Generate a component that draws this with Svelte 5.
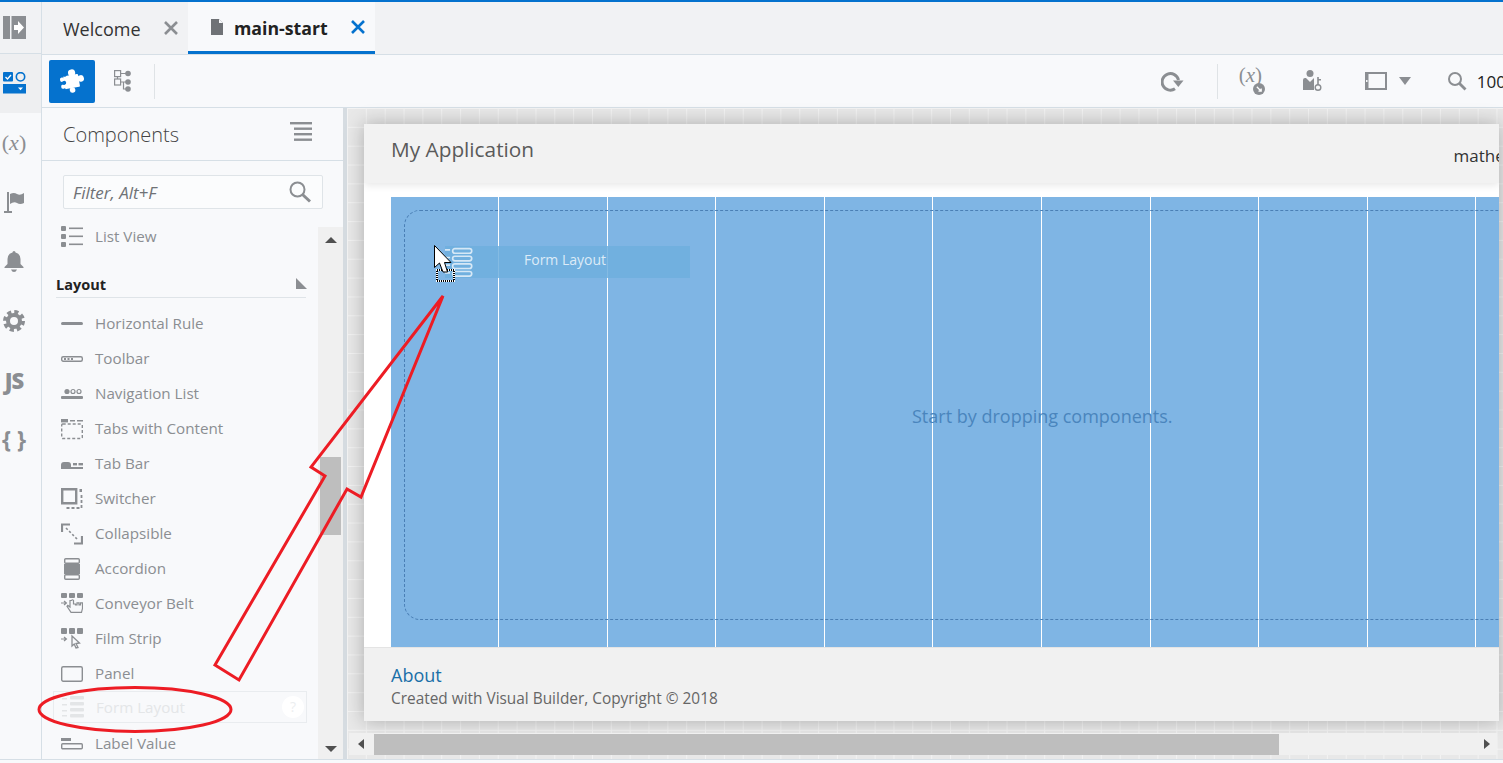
<script>
    // 组件面板条目，icon 是 22x22 的内联 SVG 内容
    const gray = "#8b8e92";
    const items = [
        { name: "Horizontal Rule", icon: `<rect x="0" y="9" width="22" height="3" rx="1.5"/>` },
        { name: "Toolbar", icon: `<rect x=".7" y="8.7" width="20.6" height="4.6" rx="1.5" fill="none" stroke="${gray}" stroke-width="1.4"/><rect x="3" y="10" width="2" height="2"/><rect x="6.5" y="10" width="2" height="2"/><rect x="10" y="10" width="2" height="2"/>` },
        { name: "Navigation List", icon: `<circle cx="6" cy="8.5" r="2.6"/><circle cx="12" cy="8.5" r="2" fill="none" stroke="${gray}" stroke-width="1.2"/><circle cx="18" cy="8.5" r="2" fill="none" stroke="${gray}" stroke-width="1.2"/><rect x="0" y="13" width="22" height="3" rx="1"/>` },
        { name: "Tabs with Content", icon: `<rect x="0" y="1" width="7" height="3.4"/><rect x="9" y="2" width="5" height="1.5"/><rect x="16" y="2" width="6" height="1.5"/><rect x=".7" y="6" width="20.6" height="14.5" rx="1" fill="none" stroke="${gray}" stroke-width="1.4" stroke-dasharray="3 2"/>` },
        { name: "Tab Bar", icon: `<path d="M0 15v-3q0-3 3-3h4q3 0 3 3v3z"/><rect x="12" y="10" width="4" height="2.4"/><rect x="17.5" y="10" width="4.5" height="2.4"/><rect x="0" y="14" width="22" height="2"/>` },
        { name: "Switcher", icon: `<path d="M1.2 1.2h14v14h-14z" fill="none" stroke="${gray}" stroke-width="2.4"/><rect x="18.5" y="1" width="2.5" height="3"/><path d="M20.5 7v13H5" fill="none" stroke="${gray}" stroke-width="1.8" stroke-dasharray="3 2"/>` },
        { name: "Collapsible", icon: `<path d="M1 9V1.500h8M21 13v7.500h-8" fill="none" stroke="${gray}" stroke-width="2.200"/><path d="M5 5l12 12" fill="none" stroke="${gray}" stroke-width="1.600" stroke-dasharray="2.400 2"/>` },
        { name: "Accordion", icon: `<rect x="3.700" y=".7" width="14.600" height="4.600" rx="1" fill="none" stroke="${gray}" stroke-width="1.400"/><rect x="3" y="6" width="16" height="10"/><rect x="3.700" y="16.700" width="14.600" height="4.600" rx="1" fill="none" stroke="${gray}" stroke-width="1.400"/>` },
        { name: "Conveyor Belt", icon: `<rect x="0" y="0" width="6" height="5" rx="1"/><rect x="8" y="0" width="6" height="5" rx="1"/><rect x="16" y="0" width="6" height="5" rx="1"/><path d="M0 10h5M3 8l2.400 2L3 12" fill="none" stroke="${gray}" stroke-width="1.200"/><path d="M9 7.500v6.500l-2.200-1.600-.8 1 4 6h10.500l1-4v-5.500h-2v2h-1.500v-2h-2v2h-1.500V11h-2V7.500q-1-1.500-2 0z" fill="none" stroke="${gray}" stroke-width="1.200"/>` },
        { name: "Film Strip", icon: `<rect x="0" y="0" width="6" height="6" rx="1"/><rect x="8" y="0" width="6" height="6" rx="1"/><rect x="16" y="0" width="6" height="6" rx="1"/><path d="M0 11h5M3 9l2.400 2L3 13" fill="none" stroke="${gray}" stroke-width="1.200"/><path d="M11 8l7.500 7-3.500.5 2 4-2 .5-1.800-4L11 18z" fill="none" stroke="${gray}" stroke-width="1.300"/>` },
        { name: "Panel", icon: `<rect x=".7" y="3.700" width="20.600" height="14.600" rx="1.500" fill="none" stroke="${gray}" stroke-width="1.400"/>` },
        { name: "Form Layout", ghost: true, icon: `<rect x="0" y="2" width="5" height="1.500"/><rect x="0" y="8" width="5" height="1.500"/><rect x="0" y="14" width="5" height="1.500"/><rect x="0" y="19" width="5" height="1.500"/><rect x="8" y="0" width="14" height="3.500" rx="1"/><rect x="8" y="6" width="14" height="3.500" rx="1"/><rect x="8" y="12" width="14" height="3.500" rx="1"/><rect x="8" y="18" width="14" height="3.500" rx="1"/>` },
        { name: "Label Value", icon: `<rect x="0" y="5" width="10" height="3"/><rect x=".7" y="10.700" width="20.600" height="5" rx="1" fill="none" stroke="${gray}" stroke-width="1.400"/>` },
    ];
    const listView = `<rect x="0" y="0" width="5" height="5" rx="1"/><rect x="0" y="8" width="5" height="5" rx="1"/><rect x="0" y="16" width="5" height="5" rx="1"/><rect x="8" y="1.500" width="14" height="1.600"/><rect x="8" y="9.500" width="14" height="1.600"/><rect x="8" y="17.500" width="14" height="1.600"/>`;

    const columns = Array.from({ length: 11 });
</script>

<div class="shell">
    <div class="app">
        <!-- 左侧图标栏 -->
        <nav class="rail">
            <div class="rail-top">
                <svg width="23" height="23" viewBox="0 0 23 23"><path d="M0 0h7v23H0zM8.500 0H23v23H8.500z" fill="#8b8e92"/><path d="M11 9h4V5l6 6.500-6 6.500v-4h-4z" fill="#fff"/></svg>
            </div>
            <div class="rail-item active">
                <svg width="23" height="23" viewBox="0 0 23 23">
                    <rect x="0" y="0" width="10" height="9.500" rx="1" fill="#0572ce"/>
                    <path d="M2.500 5l2 2 3.500-4" fill="none" stroke="#fff" stroke-width="1.300"/>
                    <circle cx="17.500" cy="4.800" r="4.200" fill="none" stroke="#0572ce" stroke-width="1.600"/>
                    <rect x="0" y="12" width="23" height="9.500" fill="#0572ce"/>
                    <path d="M15 15.500h5l-2.500 2.800z" fill="#fff"/>
                </svg>
            </div>
            <div class="rail-item"><span class="rail-x">(<i>x</i>)</span></div>
            <div class="rail-item">
                <svg width="20" height="23" viewBox="0 0 20 23" fill="#8b8e92"><rect x="3" y="1" width="2" height="20"/><rect x="0" y="20" width="8" height="2"/><path d="M6 3q4-2 7 0t7-1v10q-4 2-7 0t-7 1z"/></svg>
            </div>
            <div class="rail-item">
                <svg width="20" height="23" viewBox="0 0 20 23" fill="#8b8e92"><path d="M10 1q1.500 0 1.500 1.500Q16.500 4 16.500 9v5l3 3v1H.500v-1l3-3V9q0-5 5-6.500Q8.500 1 10 1z"/><path d="M7 19.500h6q-1 2.500-3 2.500t-3-2.500z"/></svg>
            </div>
            <div class="rail-item">
                <svg width="22" height="22" viewBox="0 0 22 22" fill="none" stroke="#8b8e92"><circle cx="11" cy="11" r="6" stroke-width="4"/><circle cx="11" cy="11" r="9" stroke-width="4" stroke-dasharray="4.070 3"/></svg>
            </div>
            <div class="rail-item"><span class="rail-js">JS</span></div>
            <div class="rail-item"><span class="rail-brace">&#123; &#125;</span></div>
        </nav>

        <div class="main">
            <!-- 标签页 -->
            <div class="tabs">
                <div class="tab welcome">
                    <span>Welcome</span>
                    <svg class="close" width="14" height="14" viewBox="0 0 14 14"><path d="M1 1l12 12M13 1L1 13" stroke="#8b8e92" stroke-width="2.600"/></svg>
                </div>
                <div class="tab current">
                    <svg width="12" height="16" viewBox="0 0 12 16"><path d="M0 0h8l4 4v12H0z" fill="#6f7276"/><path d="M8 0v4h4z" fill="#f8f9fb"/></svg>
                    <span class="current-name">main-start</span>
                    <svg class="close" width="14" height="14" viewBox="0 0 14 14"><path d="M1 1l12 12M13 1L1 13" stroke="#0572ce" stroke-width="2.600"/></svg>
                </div>
            </div>

            <!-- 工具栏 -->
            <div class="toolbar">
                <button class="tool-main" aria-label="Components">
                    <svg width="26" height="26" viewBox="0 0 26 26">
                        <g transform="rotate(-10 13 13)" fill="#fff">
                            <rect x="5" y="7" width="15" height="13" rx="1"/>
                            <circle cx="14" cy="5" r="3.600"/>
                            <circle cx="22" cy="12" r="3.300"/>
                            <circle cx="12" cy="22" r="2.800"/>
                            <circle cx="3.500" cy="10" r="2.200"/>
                            <circle cx="3.500" cy="17" r="2.200"/>
                            <circle cx="5" cy="13.500" r="2" fill="#0572ce"/>
                            <circle cx="7" cy="6" r="1.500" fill="#0572ce"/>
                        </g>
                    </svg>
                </button>
                <svg class="tree" width="18" height="22" viewBox="0 0 18 22" fill="none" stroke="#8b8e92" stroke-width="1.200">
                    <rect x=".6" y=".6" width="6" height="6"/>
                    <rect x=".6" y="9" width="6" height="6"/>
                    <path d="M6.600 3.500h6M3.500 6.600V9M6.600 12h6M9.500 12v7h3"/>
                    <circle cx="14" cy="3.500" r="2.800" fill="#8b8e92" stroke="none"/>
                    <circle cx="14" cy="12" r="2.800" fill="#8b8e92" stroke="none"/>
                    <circle cx="14" cy="19" r="2.800" fill="#8b8e92" stroke="none"/>
                </svg>
                <span class="tool-sep"></span>

                <div class="tool-right">
                    <svg width="23" height="22" viewBox="0 0 23 22" fill="none"><path d="M14 18.800A8.300 8.300 0 1 1 17.500 10" stroke="#8b8e92" stroke-width="3"/><path d="M12 10.500h10.500l-5.200 6.500z" fill="#8b8e92"/></svg>
                    <span class="tool-sep right-sep"></span>
                    <span class="tool-vars">
                        <span class="vars-text">(<i>x</i>)</span>
                        <svg width="12" height="12" viewBox="0 0 11 11"><circle cx="5.500" cy="5.500" r="5.500" fill="#8b8e92"/><path d="M3.500 3.500l4 4M7.500 5v2.500H5" fill="none" stroke="#fff" stroke-width="1.200"/></svg>
                    </span>
                    <svg class="tool-user" width="20" height="22" viewBox="0 0 20 22" fill="#8b8e92"><circle cx="7" cy="3.500" r="3.500"/><path d="M0 20V10q0-2 2-2h1l4 4 4-4v12z"/><circle cx="15" cy="17.500" r="2.800" fill="#f8f9fb" stroke="#8b8e92" stroke-width="1.400"/><path d="M14.200 15V7h1.600v2H18v1.400h-2.200V15z"/></svg>
                    <svg class="tool-frame" width="22" height="18" viewBox="0 0 22 18"><path d="M0 0h22v18H0z" fill="#8b8e92"/><rect x="3.500" y="2" width="16.500" height="14" fill="#f8f9fb"/><rect x="1" y="8" width="1.500" height="2" fill="#f8f9fb"/></svg>
                    <span class="caret"></span>
                    <svg class="tool-search" width="20" height="20" viewBox="0 0 20 20" fill="none" stroke="#8b8e92"><circle cx="8" cy="8" r="6" stroke-width="2"/><path d="M12.500 12.500l6 6" stroke-width="2.800"/></svg>
                    <span class="zoom-value">100%</span>
                </div>
            </div>

            <div class="work">
                <!-- 组件面板 -->
                <aside class="panel">
                    <div class="panel-head">
                        <span class="panel-title">Components</span>
                        <svg width="22" height="20" viewBox="0 0 22 20" fill="#8b8e92"><rect x="0" y="0" width="22" height="2.400"/><rect x="4" y="5.500" width="18" height="2.400"/><rect x="4" y="11" width="18" height="2.400"/><rect x="4" y="16.500" width="18" height="2.400"/></svg>
                    </div>
                    <div class="filter-wrap">
                        <div class="filter">
                            <span class="filter-hint">Filter, Alt+F</span>
                            <svg width="24" height="24" viewBox="0 0 24 24" fill="none" stroke="#8b8e92"><circle cx="9.500" cy="9.500" r="7" stroke-width="2"/><path d="M14.500 14.500l7.500 7" stroke-width="3"/></svg>
                        </div>
                    </div>
                    <div class="list-area">
                        <div class="list">
                            <div class="row">
                                <svg width="22" height="22" viewBox="0 0 22 22" fill={gray}>{@html listView}</svg>
                                <span class="row-name">List View</span>
                            </div>
                            <div class="section-head">
                                <span>Layout</span>
                                <span class="corner"></span>
                            </div>
                            {#each items as item (item.name)}
                                <div class="row" class:ghost={item.ghost}>
                                    <svg width="22" height="22" viewBox="0 0 22 22" fill={gray}>{@html item.icon}</svg>
                                    <span class="row-name">{item.name}</span>
                                    {#if item.ghost}
                                        <span class="help">?</span>
                                    {/if}
                                </div>
                            {/each}
                        </div>
                        <div class="vscroll">
                            <span class="arrow-up"></span>
                            <span class="vthumb"></span>
                            <span class="arrow-down"></span>
                        </div>
                    </div>
                </aside>

                <!-- 画布 -->
                <section class="canvas">
                    <div class="viewport">
                        <div class="page">
                            <header class="page-head">
                                <span class="app-name">My Application</span>
                                <span class="user">mathew</span>
                            </header>
                            <div class="page-body">
                                <div class="drop">
                                    {#each columns as _, i (i)}
                                        <div class="col"></div>
                                    {/each}
                                    <div class="dash"></div>
                                    <span class="drop-hint">Start by dropping components.</span>
                                    <div class="drag-ghost">
                                        <svg width="28" height="30" viewBox="0 0 22 23" fill="none" stroke="#d6e8f6" stroke-width="1.300">
                                            <path d="M0 2h4M0 8h4M0 14h4M0 20h4"/>
                                            <rect x="6" y="1" width="15" height="3.600" rx="1.800"/>
                                            <rect x="6" y="7" width="15" height="3.600" rx="1.800"/>
                                            <rect x="6" y="13" width="15" height="3.600" rx="1.800"/>
                                            <rect x="6" y="19" width="15" height="3.600" rx="1.800"/>
                                        </svg>
                                        <span>Form Layout</span>
                                    </div>
                                </div>
                            </div>
                            <footer class="page-foot">
                                <span class="about">About</span>
                                <span class="copy">Created with Visual Builder, Copyright © 2018</span>
                            </footer>
                        </div>
                    </div>
                    <div class="hscroll">
                        <span class="arrow-left"></span>
                        <span class="hthumb"></span>
                        <span class="arrow-right"></span>
                    </div>
                </section>
            </div>
        </div>
    </div>

    <!-- 截图上的批注和拖动光标 -->
    <svg class="notes" width="1503" height="763" viewBox="0 0 1503 763">
        <polygon points="443,296 361,497 347,489 239,680 215,665 325,476 311,467" fill="none" stroke="#ed1c24" stroke-width="3"/>
        <ellipse cx="135" cy="709.500" rx="96" ry="22" fill="none" stroke="#ed1c24" stroke-width="3"/>
        <rect x="437" y="270" width="17" height="11" fill="none" stroke="#fff" stroke-width="2"/>
        <rect x="437" y="270" width="17" height="11" fill="none" stroke="#000" stroke-width="2" stroke-dasharray="1 1"/>
        <path d="M434.500 245.500v22l5-4.500 3.500 9h4.500l-3-9.500h6.500z" fill="#fff" stroke="#000"/>
    </svg>
</div>

<style>
    :global(body) {
        margin: 0;
        overflow: hidden;
    }

    .shell {
        position: relative;
        width: 1503px;
        height: 763px;
        box-sizing: border-box;
        padding-bottom: 3px;
        background: #f8f9fb;
        font-family: "Open Sans", "Liberation Sans", sans-serif;
        overflow: hidden;
    }

    .app {
        display: flex;
        height: 100%;
        box-sizing: border-box;
        border-top: 2px solid #0572ce;
        border-bottom: 1px solid #d6dfe6;
    }

    .rail {
        flex: 0 0 41px;
        border-right: 1px solid #d6dfe6;
        display: flex;
        flex-direction: column;
    }

    .rail-top {
        height: 52px;
        flex-shrink: 0;
        box-sizing: border-box;
        background: #f1f2f4;
        border-bottom: 1px solid #d6dfe6;
        display: flex;
        align-items: center;
        padding-left: 3px;
    }

    .rail-item {
        height: 59.3px;
        flex-shrink: 0;
        display: flex;
        align-items: center;
        justify-content: center;
        padding-right: 13px;
        color: #8b8e92;
    }

    .rail-item.active {
        background: #eeeff1;
    }

    .rail-x {
        font-family: "Liberation Serif", serif;
        font-size: 22px;
    }

    .rail-js {
        font-size: 22px;
        font-weight: 800;
        letter-spacing: -1px;
    }

    .rail-brace {
        font-size: 23px;
        font-weight: 700;
        white-space: nowrap;
    }

    .main {
        flex: 1;
        min-width: 0;
        display: flex;
        flex-direction: column;
        overflow: hidden;
    }

    .tabs {
        height: 53px;
        flex-shrink: 0;
        box-sizing: border-box;
        display: flex;
        background: #f1f2f4;
        border-bottom: 1px solid #d6dfe6;
    }

    .tab {
        display: flex;
        align-items: center;
        box-sizing: border-box;
        font-size: 18px;
        color: #333;
    }

    .tab span {
        padding-top: 2px;
    }

    .welcome {
        width: 146px;
        padding: 0 10px 0 21px;
        justify-content: space-between;
    }

    .current {
        width: 187px;
        padding: 0 10px 0 23px;
        background: #f8f9fb;
        border-bottom: 3px solid #0572ce;
        height: 52px;
    }

    .current-name {
        margin-left: 11px;
        margin-right: auto;
        font-size: 17.7px;
        font-weight: 700;
        color: #222;
    }

    .toolbar {
        height: 53px;
        flex-shrink: 0;
        box-sizing: border-box;
        display: flex;
        align-items: center;
        padding-left: 7px;
        border-bottom: 1px solid #d6dfe6;
    }

    .tool-main {
        width: 46px;
        height: 43px;
        padding: 0;
        border: none;
        border-radius: 2px;
        background: #0572ce;
        display: flex;
        align-items: center;
        justify-content: center;
    }

    .tree {
        margin-left: 19px;
    }

    .tool-sep {
        width: 1px;
        height: 35px;
        background: #dfe3e6;
        margin-left: 22px;
    }

    .tool-right {
        margin-left: auto;
        margin-right: -17px;
        display: flex;
        align-items: center;
    }

    .right-sep {
        margin-left: 33px;
    }

    .tool-vars {
        margin-left: 21px;
        width: 24px;
        height: 26px;
        position: relative;
        color: #8b8e92;
        font-family: "Liberation Serif", serif;
        font-size: 21px;
    }

    .tool-vars svg {
        position: absolute;
        right: -2px;
        bottom: -1px;
    }

    .vars-text {
        position: absolute;
        left: 0;
        top: -5px;
        white-space: nowrap;
    }

    .tool-user {
        margin-left: 40px;
    }

    .tool-frame {
        margin-left: 42px;
    }

    .caret {
        margin-left: 12px;
        width: 0;
        height: 0;
        border-left: 6px solid transparent;
        border-right: 6px solid transparent;
        border-top: 8px solid #8b8e92;
    }

    .tool-search {
        margin-left: 36px;
    }

    .zoom-value {
        margin-left: 10px;
        font-size: 17px;
        color: #222;
    }

    .work {
        flex: 1;
        min-height: 0;
        display: flex;
    }

    .panel {
        width: 301px;
        flex-shrink: 0;
        border-right: 4px solid #d6dce1;
        display: flex;
        flex-direction: column;
    }

    .panel-head {
        height: 53px;
        flex-shrink: 0;
        box-sizing: border-box;
        display: flex;
        align-items: center;
        justify-content: space-between;
        padding: 0 31px 0 21px;
        border-bottom: 1px solid #d6dfe6;
    }

    .panel-head svg {
        margin-bottom: 4px;
    }

    .panel-title {
        font-size: 20px;
        font-weight: 300;
        color: #444;
    }

    .filter-wrap {
        height: 58px;
        flex-shrink: 0;
        padding: 14px 20px 0 21px;
        box-sizing: border-box;
    }

    .filter {
        height: 34px;
        box-sizing: border-box;
        border: 1px solid #dfe4e8;
        border-radius: 2px;
        display: flex;
        align-items: center;
        justify-content: space-between;
        padding: 0 10px 0 9px;
        background: #fbfcfd;
    }

    .filter-hint {
        font-size: 17px;
        font-style: italic;
        color: #6f7276;
    }

    .list-area {
        flex: 1;
        min-height: 0;
        display: flex;
    }

    .list {
        flex: 1;
        min-width: 0;
        overflow: hidden;
    }

    .row {
        position: relative;
        height: 35px;
        display: flex;
        align-items: center;
        gap: 12px;
        margin-left: 19px;
        font-size: 15.2px;
        color: #8b8e92;
    }

    .row-name {
        margin-top: -2px;
    }

    .row.ghost {
        box-sizing: border-box;
        height: 32px;
        margin: 0 11px 3px 11px;
        padding-left: 8px;
        border: 1px solid #e9ecef;
        color: #e4e6e8;
    }

    .row.ghost .row-name {
        margin-top: 0;
    }

    .row.ghost svg {
        opacity: 0.18;
    }

    .help {
        position: absolute;
        right: 2px;
        top: 4px;
        width: 22px;
        height: 22px;
        border-radius: 50%;
        background: #fff;
        color: #eceef0;
        font-size: 14px;
        text-align: center;
        line-height: 22px;
    }

    .section-head {
        position: relative;
        height: 44px;
        margin: 0 12px 8px 14px;
        box-sizing: border-box;
        border-bottom: 1px solid #dfe4e8;
        display: flex;
        align-items: flex-end;
        padding-bottom: 3px;
        font-size: 14.5px;
        font-weight: 700;
        color: #222;
    }

    .corner {
        position: absolute;
        right: -1px;
        bottom: 8px;
        width: 0;
        height: 0;
        border-right: 11px solid transparent;
        border-bottom: 11px solid #8b8e92;
    }

    .vscroll {
        width: 25px;
        flex-shrink: 0;
        margin-top: 8px;
        background: #f0f0f0;
        display: flex;
        flex-direction: column;
        align-items: center;
        position: relative;
    }

    .arrow-up {
        margin-top: 10px;
        border-left: 6px solid transparent;
        border-right: 6px solid transparent;
        border-bottom: 6px solid #505050;
    }

    .vthumb {
        margin-top: 214px;
        width: 21px;
        height: 78px;
        background: #bebebe;
    }

    .arrow-down {
        margin-top: auto;
        margin-bottom: 7px;
        border-left: 6px solid transparent;
        border-right: 6px solid transparent;
        border-top: 6px solid #505050;
    }

    .canvas {
        flex: 1;
        min-width: 0;
        display: flex;
        flex-direction: column;
        background-color: #e8e8e8;
        background-image:
            linear-gradient(#f3f3f3 1px, transparent 1px),
            linear-gradient(90deg, #f3f3f3 1px, transparent 1px);
        background-size: 18.85px 18.85px;
    }

    .viewport {
        flex: 1;
        min-height: 0;
        padding: 16px 4px 12px 17px;
    }

    .page {
        height: 597px;
        background: #fff;
        display: flex;
        flex-direction: column;
        overflow: hidden;
        box-shadow: 0 0 18px rgba(0, 0, 0, 0.26);
    }

    .page-head {
        height: 59px;
        flex-shrink: 0;
        box-sizing: border-box;
        background: #f2f2f2;
        display: flex;
        align-items: center;
        justify-content: space-between;
        padding: 0 0 6px 27px;
        box-shadow: 0 2px 8px rgba(0, 0, 0, 0.1);
    }

    .app-name {
        margin-top: -3px;
        font-size: 20.8px;
        color: #5a5a5a;
    }

    .user {
        margin-right: -19px;
        padding-top: 9px;
        font-size: 17px;
        color: #333;
    }

    .page-body {
        flex: 1;
        min-height: 0;
        padding: 14px 0 0 27px;
    }

    .drop {
        position: relative;
        height: 450px;
        display: flex;
        overflow: hidden;
        background: #7fb5e4;
    }

    .col {
        flex: 0 0 108.55px;
        box-sizing: border-box;
        border-right: 1px solid #fff;
    }

    .col:first-child {
        margin-left: -0.3px;
    }

    .dash {
        position: absolute;
        left: 13px;
        top: 13px;
        width: 1200px;
        height: 410px;
        box-sizing: border-box;
        border: 1px dashed #4a7fb5;
        border-radius: 16px;
    }

    .drop-hint {
        position: absolute;
        left: 521px;
        top: 207px;
        font-size: 18px;
        color: #4a85bd;
    }

    .drag-ghost {
        position: absolute;
        left: 54px;
        top: 49px;
        width: 245px;
        height: 32px;
        display: flex;
        align-items: center;
        gap: 51px;
        background: rgba(110, 175, 222, 0.85);
    }

    .drag-ghost span {
        font-size: 14px;
        color: #dcebf7;
        margin-top: -6px;
    }

    .page-foot {
        height: 74px;
        flex-shrink: 0;
        box-sizing: border-box;
        background: #f1f1f1;
        border-top: 1px solid #e4e4e4;
        padding: 14px 0 0 27px;
        display: flex;
        flex-direction: column;
        gap: 0;
    }

    .about {
        font-size: 18px;
        line-height: 26px;
        color: #1a6fa8;
    }

    .copy {
        font-size: 15.4px;
        line-height: 22px;
        color: #666;
    }

    .hscroll {
        height: 22px;
        flex-shrink: 0;
        margin: 0 6px 4px 2px;
        background: #f0f0f0;
        display: flex;
        align-items: center;
    }

    .arrow-left {
        margin-left: 9px;
        border-top: 5px solid transparent;
        border-bottom: 5px solid transparent;
        border-right: 6px solid #505050;
    }

    .hthumb {
        margin-left: 10px;
        width: 905px;
        height: 21px;
        background: #bebebe;
    }

    .arrow-right {
        margin-left: auto;
        margin-right: 7px;
        border-top: 5px solid transparent;
        border-bottom: 5px solid transparent;
        border-left: 6px solid #505050;
    }

    .notes {
        position: absolute;
        left: 0;
        top: 0;
        pointer-events: none;
    }
</style>
